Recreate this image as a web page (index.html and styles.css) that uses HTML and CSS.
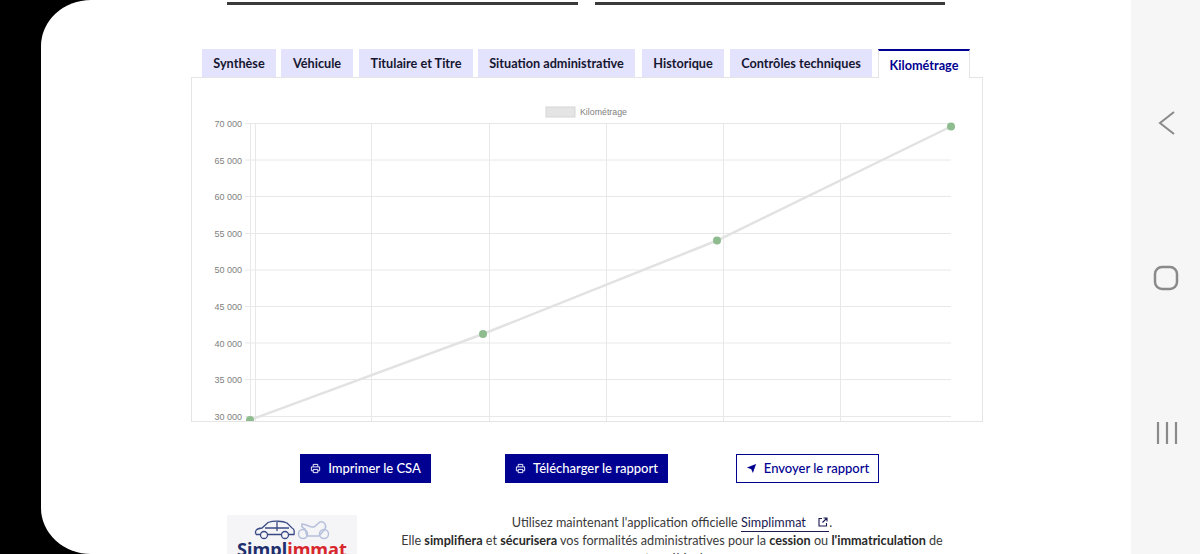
FILE: index.html
```html
<!DOCTYPE html>
<html lang="fr">
<head>
<meta charset="utf-8">
<title>Kilométrage</title>
<link rel="stylesheet" href="styles.css">
</head>
<body>
<div class="screen">
  <main class="page">
    <div class="rules"><span class="rule"></span><span class="rule"></span></div>
    <nav class="tabs">
      <a class="tab">Synthèse</a>
      <a class="tab">Véhicule</a>
      <a class="tab">Titulaire et Titre</a>
      <a class="tab tab-wide">Situation administrative</a>
      <a class="tab">Historique</a>
      <a class="tab">Contrôles techniques</a>
      <a class="tab tab-active">Kilométrage</a>
    </nav>
    <section class="panel">
      <svg class="chart" width="789" height="344" viewBox="192 78 789 344" xmlns="http://www.w3.org/2000/svg">
        <g class="grid">
          <path d="M245 123.5H951M245 160H951M245 196.5H951M245 233.5H951M245 270H951M245 306.5H951M245 343H951M245 379.5H951M245 416.5H951"/>
          <path d="M250.5 123V422M255.5 123V422M371.5 123V422M489.5 123V422M606.5 123V422M723.5 123V422M840.5 123V422"/>
        </g>
        <rect class="legend-box" x="546" y="107" width="29" height="10"/>
        <text class="legend" x="580" y="115">Kilométrage</text>
        <g class="axis">
          <text x="242" y="127">70 000</text>
          <text x="242" y="163.500">65 000</text>
          <text x="242" y="200">60 000</text>
          <text x="242" y="236.500">55 000</text>
          <text x="242" y="273">50 000</text>
          <text x="242" y="310">45 000</text>
          <text x="242" y="346.500">40 000</text>
          <text x="242" y="383">35 000</text>
          <text x="242" y="419.500">30 000</text>
        </g>
        <polyline class="line" points="250,420 483,334 717,240.500 951,126.500"/>
        <g class="dots">
          <circle cx="250" cy="420" r="4"/>
          <circle cx="483" cy="334" r="4"/>
          <circle cx="717" cy="240.500" r="4"/>
          <circle cx="951" cy="126.500" r="4"/>
        </g>
      </svg>
    </section>
    <div class="actions">
      <a class="btn btn-csa">
        <svg class="btn-icon" viewBox="0 0 24 24" fill="none" stroke="currentColor" stroke-width="2"><path d="M7 8V3h10v5M7 17H3V8.500h18V17h-4"/><path d="M7 14h10v7H7z"/></svg>
        Imprimer le CSA</a>
      <a class="btn btn-report">
        <svg class="btn-icon" viewBox="0 0 24 24" fill="none" stroke="currentColor" stroke-width="2"><path d="M7 8V3h10v5M7 17H3V8.500h18V17h-4"/><path d="M7 14h10v7H7z"/></svg>
        Télécharger le rapport</a>
      <a class="btn btn-outline">
        <svg class="btn-icon" viewBox="0 0 24 24" fill="currentColor"><path d="M2 10 22 2l-7 20-3.500-8.500z"/></svg>
        Envoyer le rapport</a>
    </div>
    <section class="promo">
      <div class="logo">
        <svg class="logo-art" width="76" height="21" viewBox="0 0 76 21" fill="none" xmlns="http://www.w3.org/2000/svg">
          <g stroke="#3a4a85" stroke-width="1.300">
            <path d="M2 15.500C0.500 12 2 9.500 8 9L14 3.500C20 1.500 29 2 33 4L38 9C40.500 10 40.500 13 40 15.500H35M27 15.500H14M6 15.500H2"/>
            <path d="M11 9H35M23 3V12"/>
            <circle cx="10" cy="16" r="3.500"/><circle cx="31" cy="16" r="3.500"/>
          </g>
          <g stroke="#b6c0dc" stroke-width="1.500">
            <circle cx="49" cy="15" r="4.500"/><circle cx="70" cy="15" r="4.500"/>
            <path d="M48 5C53 5 56 9 60 8L66 3C70 2 73 6 71 10L65 17H53L51 10C49 9 47 7 48 5Z"/>
          </g>
        </svg>
        <div class="logo-name">Simpl<span class="logo-red">immat</span></div>
      </div>
      <div class="promo-text">
        <p>Utilisez maintenant l'application officielle <a class="promo-link">Simplimmat
          <svg class="ext-icon" viewBox="0 0 24 24" fill="none" stroke="currentColor" stroke-width="2.200"><path d="M10 5H4v15h15v-6"/><path d="M13 4h7v7M20 4l-9 9"/></svg></a>.</p>
        <p>Elle <b>simplifiera</b> et <b>sécurisera</b> vos formalités administratives pour la <b>cession</b> ou <b>l'immatriculation</b> de</p>
        <p>votre véhicule.</p>
      </div>
    </section>
  </main>
  <aside class="softkeys">
    <svg class="key key-back" width="18" height="26" viewBox="0 0 18 26" fill="none"><path d="M16 2 2 13l14 11"/></svg>
    <svg class="key key-home" width="26" height="26" viewBox="0 0 26 26" fill="none"><rect x="2" y="2" width="22" height="22" rx="7"/></svg>
    <svg class="key key-menu" width="24" height="24" viewBox="0 0 24 24" fill="none"><path d="M3 1V23M12 1V23M21 1V23"/></svg>
  </aside>
</div>
</body>
</html>
```
FILE: styles.css
```css
* { box-sizing: border-box; }
html, body { margin: 0; height: 100%; overflow: hidden; }
body { background: #000; font-family: Lato, "Noto Sans", sans-serif; }
.screen { display: flex; width: 1200px; height: 554px; padding-left: 41px; }
.page {
  flex: none;
  width: 1090px;
  height: 554px;
  overflow: hidden;
  background: #fff;
  border-radius: 50px 0 0 50px / 46px 0 0 46px;
}
.rules { display: flex; gap: 17px; margin-left: 186px; width: 718px; height: 49px; padding-top: 2px; }
.rule { flex: 1; height: 3px; background: #3a3a3a; }
.tabs { display: flex; margin-left: 161px; gap: 5px; height: 28px; }
.tab {
  display: flex;
  align-items: center;
  justify-content: center;
  width: 74px;
  background: #e3e3fd;
  color: #161630;
  font-size: 12.700px;
  font-weight: 700;
  white-space: nowrap;
}
.tab:nth-child(2) { width: 72px; }
.tab:nth-child(3) { width: 114px; margin-left: 1px; }
.tab:nth-child(4) { width: 157px; }
.tab:nth-child(5) { width: 82px; margin-left: 2px; }
.tab:nth-child(6) { width: 142px; margin-left: 1px; }
.tab-active {
  width: 92px;
  margin-left: 1px;
  background: #fff;
  color: #000091;
  border-top: 2px solid #000091;
  border-left: 1px solid #e5e5e5;
  border-right: 1px solid #e5e5e5;
  position: relative;
  z-index: 1;
  height: 29px;
}
.panel { margin-left: 150px; width: 792px; height: 345px; border: 1px solid #e5e5e5; background: #fff; overflow: hidden; }
.chart { display: block; }
.grid path { stroke: #e8e8e8; stroke-width: 1; fill: none; }
.legend-box { fill: #e4e4e4; stroke: #d6d6d6; stroke-width: 1; }
.legend { font-family: "Liberation Sans", sans-serif; font-size: 8.800px; fill: #808080; }
.axis text { font-family: "Liberation Sans", sans-serif; font-size: 9px; fill: #808080; text-anchor: end; }
.line { fill: none; stroke: #e2e2e2; stroke-width: 2.500; }
.dots circle { fill: #8fbc8f; }
.actions { display: flex; margin: 32px 0 0 259px; height: 29px; }
.btn {
  display: flex;
  align-items: center;
  justify-content: center;
  gap: 7px;
  height: 29px;
  padding-bottom: 1px;
  background: #000091;
  color: #fff;
  font-size: 13px;
  font-weight: 500;
  white-space: nowrap;
}
.btn-icon { width: 11px; height: 11px; }
.btn-csa { width: 131px; }
.btn-report { width: 163px; margin-left: 74px; }
.btn-outline { width: 143px; margin-left: 68px; background: #fff; color: #000091; border: 1px solid #000091; }
.promo { display: flex; margin: 32px 0 0 186px; }
.logo { flex: none; width: 130px; height: 60px; background: #f5f5f7; padding-top: 4px; text-align: center; }
.logo-art { display: block; margin: 0 auto -3px; }
.logo-name { color: #1f2f6e; font-family: "Noto Sans", sans-serif; font-size: 18.200px; font-weight: 700; line-height: 24px; }
.logo-red { color: #d8272d; }
.promo-text { width: 630px; margin-top: -1px; text-align: center; color: #3a3a3a; font-size: 12.650px; line-height: 18px; }
.promo-text p { margin: 0; white-space: nowrap; }
.promo-text b { font-weight: 700; color: #2a2a2a; }
.promo-link { color: #1a1a50; border-bottom: 1px solid #1a1a50; padding-bottom: 1px; }
.ext-icon { width: 12px; height: 12px; margin-left: 8px; vertical-align: -1px; }
.softkeys { flex: none; width: 69px; height: 554px; background: #f6f6f6; position: relative; }
.key { position: absolute; stroke: #8a8a8a; stroke-width: 2; }
.key-back { left: 27px; top: 110px; }
.key-home { left: 22px; top: 265px; stroke-width: 2.500; }
.key-menu { left: 24px; top: 421px; stroke-width: 2.200; }
```
